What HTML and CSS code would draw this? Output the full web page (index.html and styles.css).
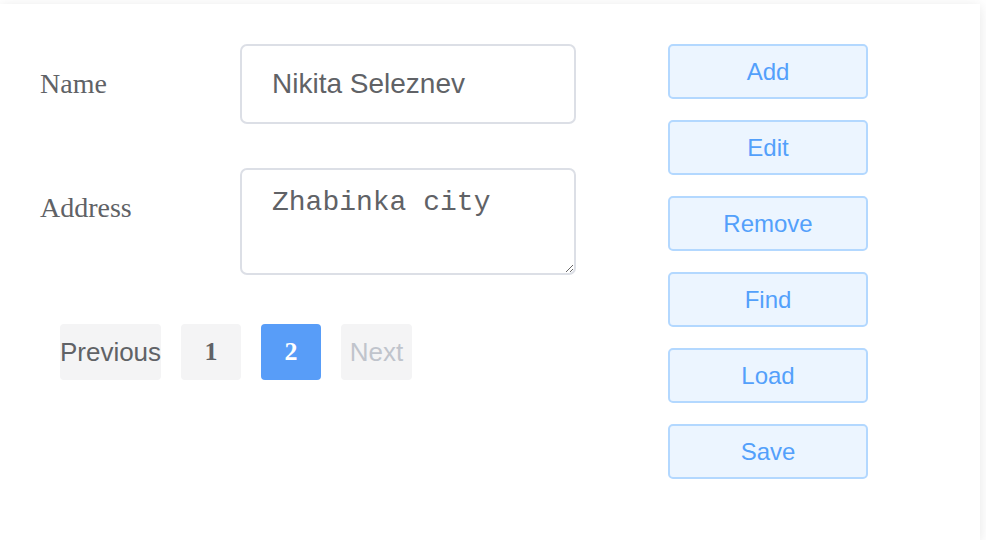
FILE: index.html
```html
<!DOCTYPE html>
<html>
<head>
<meta charset="utf-8">
<link rel="stylesheet" href="styles.css">
</head>
<body>
<div class="card">
  <div class="form">
    <div class="form-item">
      <label class="label">Name</label>
      <input class="input" type="text" value="Nikita Seleznev">
    </div>
    <div class="form-item">
      <label class="label">Address</label>
      <textarea class="textarea" rows="2">Zhabinka city</textarea>
    </div>
    <div class="pager">
      <button class="pg pg-prev">Previous</button>
      <button class="pg pg-num">1</button>
      <button class="pg pg-num active">2</button>
      <button class="pg pg-next">Next</button>
    </div>
  </div>
  <div class="actions">
    <button class="btn">Add</button>
    <button class="btn">Edit</button>
    <button class="btn">Remove</button>
    <button class="btn">Find</button>
    <button class="btn">Load</button>
    <button class="btn">Save</button>
  </div>
</div>
</body>
</html>
```

FILE: styles.css
```css
* { box-sizing: border-box; }
html, body { margin: 0; padding: 0; background: #ffffff; }
body { padding-top: 4px; font-family: "Liberation Serif", serif; }

.card {
  width: 980px;
  height: 536px;
  background: #ffffff;
  box-shadow: 0 2px 12px 0 rgba(0, 0, 0, 0.1);
  display: flex;
  padding: 40px 0 0 40px;
}

.form { width: 536px; display: flex; flex-direction: column; }

.form-item {
  display: flex;
  align-items: flex-start;
  margin-bottom: 44px;
}

.label {
  width: 200px;
  flex: none;
  font-family: "Liberation Serif", serif;
  font-size: 28px;
  line-height: 80px;
  color: #606266;
}

.input {
  width: 336px;
  height: 80px;
  border: 2px solid #dcdfe6;
  border-radius: 7px;
  padding: 0 30px;
  font-family: "Liberation Sans", Arial, sans-serif;
  font-size: 28px;
  color: #606266;
  outline: none;
  background: #fff;
}

.textarea {
  width: 336px;
  height: 107px;
  border: 2px solid #dcdfe6;
  border-radius: 7px;
  padding: 12px 30px 8px;
  font-family: "Liberation Mono", "Courier New", monospace;
  font-size: 28px;
  line-height: 42px;
  color: #606266;
  outline: none;
  background: #fff;
  resize: vertical;
  display: block;
}

.form-item:nth-child(2) { margin-bottom: 49px; }

.pager {
  display: flex;
  gap: 20px;
  padding-left: 20px;
}

.pg {
  height: 56px;
  min-width: 60px;
  border: none;
  border-radius: 4px;
  background: #f4f4f5;
  color: #606266;
  padding: 0;
  margin: 0;
  display: flex;
  align-items: center;
  justify-content: center;
  cursor: pointer;
}

.pg-prev, .pg-next {
  font-family: "Liberation Sans", Arial, sans-serif;
  font-size: 26px;
}
.pg-prev { width: 101px; }
.pg-next { width: 71px; color: #c0c4cc; cursor: not-allowed; }

.pg-num {
  font-family: "Liberation Serif", serif;
  font-weight: bold;
  font-size: 26px;
}

.pg-num.active { background: #589df8; color: #ffffff; }

.actions {
  margin-left: 92px;
  width: 200px;
  display: flex;
  flex-direction: column;
  gap: 21px;
}

.btn {
  height: 55px;
  width: 200px;
  border: 2px solid #b3d8ff;
  border-radius: 5px;
  background: #ecf5ff;
  color: #53a0fb;
  font-family: "Liberation Sans", Arial, sans-serif;
  font-size: 24px;
  padding: 0;
  cursor: pointer;
}
```
